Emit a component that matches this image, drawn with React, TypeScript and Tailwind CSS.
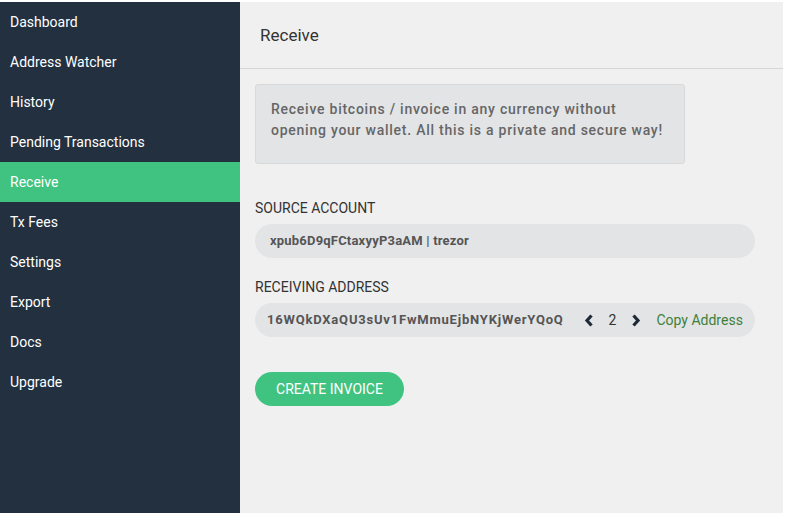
const menu = [
  'Dashboard',
  'Address Watcher',
  'History',
  'Pending Transactions',
  'Receive',
  'Tx Fees',
  'Settings',
  'Export',
  'Docs',
  'Upgrade',
];

function Chevron({ dir }: { dir: 'left' | 'right' }) {
  return (
    <svg width="10" height="13" viewBox="0 0 10 13" className="shrink-0">
      <polyline
        points={dir === 'left' ? '7.5,1.5 3,6.5 7.5,11.5' : '2.5,1.5 7,6.5 2.5,11.5'}
        fill="none"
        stroke="#1f2a36"
        strokeWidth="3.2"
        strokeLinejoin="miter"
      />
    </svg>
  );
}

export default function App() {
  return (
    <div className="flex h-[513px] w-[785px] flex-col overflow-hidden bg-white pt-[2px] pr-[2px] font-['Roboto',sans-serif]">
      <div className="flex flex-1">
        <nav className="w-[240px] shrink-0 bg-[#22303f]">
          {menu.map((item) => (
            <div
              key={item}
              className={
                item === 'Receive'
                  ? 'flex h-10 items-center bg-[#40c380] pl-[10px] text-[14px] text-white'
                  : 'flex h-10 items-center pl-[10px] text-[14px] text-white'
              }
            >
              {item}
            </div>
          ))}
        </nav>

        <main className="flex-1 bg-[#f0f0f0]">
          <header className="flex h-[67px] items-center border-b border-[#d6d6d6] pt-[2px] pl-5">
            <h1 className="text-[17px] text-[#333]">Receive</h1>
          </header>

          <div className="px-[15px] pt-[15px]">
            <div className="w-[430px] rounded-[3px] border border-[#d9d9d9] bg-[#e3e4e6] px-[15px] pt-[14px] pb-[22px]">
              <p className="text-[14px] leading-[21px] font-medium tracking-[0.75px] text-[#666]">
                Receive bitcoins / invoice in any currency without opening your wallet. All this is a private and secure way!
              </p>
            </div>

            <div className="mt-[35px] text-[14px] leading-[18px] text-[#333]">SOURCE ACCOUNT</div>
            <div className="mt-[7px] flex h-[34px] w-[500px] items-center rounded-full bg-[#e3e4e6] pl-[15px]">
              <span className="text-[13px] font-bold tracking-[0.2px] text-[#555]">xpub6D9qFCtaxyyP3aAM | trezor</span>
            </div>

            <div className="mt-[20px] text-[14px] leading-[18px] text-[#333]">RECEIVING ADDRESS</div>
            <div className="mt-[7px] flex h-[34px] w-[500px] items-center rounded-full bg-[#e3e4e6] pl-[12px]">
              <span className="text-[13px] font-bold tracking-[0.8px] text-[#555]">16WQkDXaQU3sUv1FwMmuEjbNYKjWerYQoQ</span>
              <span className="ml-[20px] flex">
                <Chevron dir="left" />
              </span>
              <span className="ml-[15px] text-[14px] text-[#333]">2</span>
              <span className="ml-[15px] flex">
                <Chevron dir="right" />
              </span>
              <span className="ml-[15px] text-[14px] text-[#3f7f3a]">Copy Address</span>
            </div>

            <button className="mt-[35px] flex h-[34px] w-[149px] items-center justify-center rounded-full bg-[#40c380] text-[14px] text-white">
              CREATE INVOICE
            </button>
          </div>
        </main>
      </div>
    </div>
  );
}
